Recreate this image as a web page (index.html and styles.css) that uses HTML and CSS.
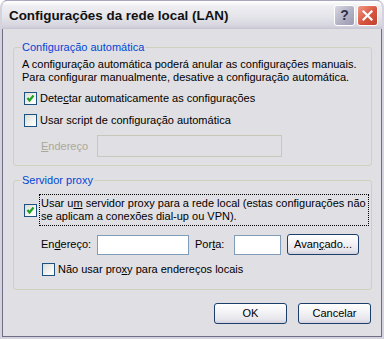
FILE: index.html
```html
<!DOCTYPE html>
<html lang="pt">
<head>
  <meta charset="UTF-8" />
  <title>Configurações da rede local (LAN)</title>
  <link rel="stylesheet" href="styles.css">
</head>
<body>
  <div class="window">
    <div class="titlebar">
      <span class="title">Configurações da rede local (LAN)</span>
      <div class="tb-buttons">
        <span class="tb-btn help">?</span>
        <span class="tb-btn close">
          <svg width="11" height="11" viewBox="0 0 11 11"><path d="M1.5 1.5 L9.5 9.5 M9.5 1.5 L1.5 9.5" stroke="#fff" stroke-width="2.2" stroke-linecap="square"/></svg>
        </span>
      </div>
    </div>
    <div class="client">
      <fieldset class="group auto">
        <legend>Configuração automática</legend>
        <p class="info">A configuração automática poderá anular as configurações manuais.<br>Para configurar manualmente, desative a configuração automática.</p>
        <label class="check first">
          <span class="box checked"></span>
          <span>Dete<u>c</u>tar automaticamente as configurações</span>
        </label>
        <label class="check">
          <span class="box"></span>
          <span>Usar script de configuração automática</span>
        </label>
        <div class="field-row disabled">
          <span class="field-label"><u>E</u>ndereço</span>
          <span class="textbox wide"></span>
        </div>
      </fieldset>

      <fieldset class="group proxy">
        <legend>Servidor proxy</legend>
        <label class="check multi">
          <span class="box checked"></span>
          <span class="focus">Usar u<u>m</u> servidor proxy para a rede local (estas configurações não<br>se aplicam a conexões dial-up ou VPN).</span>
        </label>
        <div class="field-row address">
          <span class="field-label">En<u>d</u>ereço:</span>
          <span class="textbox addr"></span>
          <span class="port-label">Por<u>t</u>a:</span>
          <span class="textbox port"></span>
          <span class="button adv">Avan<u>ç</u>ado...</span>
        </div>
        <label class="check sub">
          <span class="box"></span>
          <span>Não usar pro<u>x</u>y para endereços locais</span>
        </label>
      </fieldset>

      <div class="actions">
        <span class="button">OK</span>
        <span class="button">Cancelar</span>
      </div>
    </div>
  </div>
</body>
</html>
```

FILE: styles.css
```css
* {
  box-sizing: border-box;
}
body {
  margin: 0;
  background: #fff;
  font-family: 'Liberation Sans', Arial, sans-serif;
  font-size: 11px;
  line-height: 13px;
  color: #000;
}
.window {
  width: 384px;
  height: 339px;
  background: #e0dfe3;
  border: 2px solid #d4d3de;
  border-top: none;
  border-radius: 7px 7px 0 0;
  box-shadow: inset 0 0 0 1px #6f6e88;
  display: flex;
  flex-direction: column;
  overflow: hidden;
}
.titlebar {
  height: 29px;
  margin: 0 -2px;
  flex-shrink: 0;
  display: flex;
  align-items: center;
  justify-content: space-between;
  padding: 0 5px 0 8px;
  border-radius: 7px 7px 0 0;
  border: 1px solid #a8a7be;
  border-bottom: none;
  background: linear-gradient(#ffffff 0%, #eeeef2 20%, #e3e3e9 60%, #d5d4de 90%, #c4c3d1 100%);
}
.title {
  font-family: 'Liberation Sans', Arial, sans-serif;
  font-weight: bold;
  font-size: 13.4px;
  color: #111;
  padding-top: 1px;
}
.tb-buttons {
  display: flex;
  gap: 2px;
}
.tb-btn {
  width: 21px;
  height: 21px;
  border: 1px solid #fff;
  border-radius: 3px;
  display: flex;
  align-items: center;
  justify-content: center;
}
.help {
  background: linear-gradient(135deg, #d6d6e2, #a9a8bd 70%, #9d9cb4);
  color: #2f2e48;
  font-weight: bold;
  font-size: 14px;
}
.close {
  background: linear-gradient(135deg, #f09a88, #d7553f 55%, #c0402c);
}
.client {
  flex: 1;
  padding: 12px 10px 0 11px;
}
.group {
  margin: 0;
  padding: 4px 7px 7px 8px;
  border: 1px solid #d0d0bf;
  border-radius: 3px;
  min-width: 0;
}
.group.auto {
  padding-bottom: 8px;
}
.group legend {
  padding: 0 1px;
  margin-left: -1px;
  color: #0046d5;
}
.info {
  margin: 0;
  white-space: nowrap;
}
.check {
  display: flex;
  align-items: center;
  gap: 3px;
  margin-top: 9px;
  padding-left: 2px;
  white-space: nowrap;
}
.check.first {
  margin-top: 8px;
}
.box {
  width: 13px;
  height: 13px;
  flex-shrink: 0;
  border: 1px solid #1c5180;
  background: linear-gradient(135deg, #dcdcd7, #fdfdfc 85%);
}
.box.checked {
  background-image: url("data:image/svg+xml,%3Csvg xmlns='http://www.w3.org/2000/svg' width='11' height='11'%3E%3Cpath d='M2.5 5 L4.5 7.5 L8.5 2.5' stroke='%2321a121' stroke-width='2.2' fill='none'/%3E%3C/svg%3E"), linear-gradient(135deg, #dcdcd7, #fdfdfc 85%);
}
.field-row {
  display: flex;
  align-items: center;
  margin-top: 7px;
}
.field-row.disabled {
  margin-top: 8px;
}
.field-label {
  width: 75px;
  padding-left: 19px;
}
.disabled {
  color: #aca899;
}
.textbox {
  height: 20px;
  border: 1px solid #7f9db9;
  background: #fff;
}
.disabled .textbox {
  height: 22px;
  border-color: #c9c7ba;
  background: #e0dfe3;
}
.wide {
  width: 185px;
}
.proxy {
  margin-top: 8px;
  padding-bottom: 13px;
}
.check.multi {
  margin-top: 4px;
}
.focus {
  outline: 1px dotted #000;
  padding: 2px 2px 2px 1px;
}
.address {
  margin-top: 9px;
}
.addr {
  width: 92px;
}
.port-label {
  margin-left: 6px;
  width: 39px;
}
.port {
  width: 47px;
}
.button {
  height: 21px;
  border: 1px solid #1c3e6b;
  border-radius: 3px;
  background: linear-gradient(#ffffff, #f4f4f6 40%, #e7e6ec 80%, #d4d3de);
  display: flex;
  align-items: center;
  justify-content: center;
}
.adv {
  width: 72px;
  margin-left: 6px;
}
.check.sub {
  margin-top: 8px;
  padding-left: 20px;
}
.actions {
  display: flex;
  justify-content: flex-end;
  gap: 11px;
  margin-top: 13px;
  padding-right: 1px;
}
.actions .button {
  width: 73px;
  height: 21px;
}
```
